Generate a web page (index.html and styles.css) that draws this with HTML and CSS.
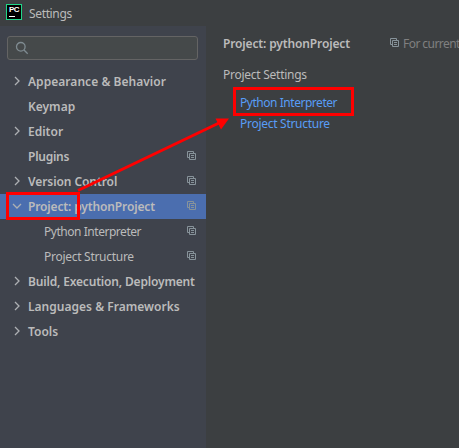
FILE: index.html
```
<!DOCTYPE html>
<html lang="en">
<head>
<meta charset="utf-8">
<title>Settings</title>
<link rel="stylesheet" href="styles.css">
</head>
<body>
<svg class="defs" width="0" height="0">
  <symbol id="copy" viewBox="0 0 9 9"><path d="M2 6.5H.5v-6h6V2M2.5 2.5h6v6h-6zM4 4.5h3M4 6.5h3"/></symbol>
  <symbol id="right" viewBox="0 0 6 10"><path d="M1 1l4 4-4 4"/></symbol>
  <symbol id="down" viewBox="0 0 10 6"><path d="M1 1l4 4 4-4"/></symbol>
</svg>
<div class="window">
  <header class="titlebar">
    <div class="logo"><span>PC</span><i></i></div>
    <span class="title">Settings</span>
  </header>
  <div class="body">
    <nav class="sidebar">
      <div class="search">
        <svg width="14" height="14" viewBox="0 0 14 14"><circle cx="5.8" cy="5.8" r="4.3"/><path d="M9 9l3.7 3.7"/></svg>
      </div>
      <ul class="tree">
        <li><svg class="chev"><use href="#right"/></svg><span class="t-appearance">Appearance &amp; Behavior</span></li>
        <li><span class="t-keymap">Keymap</span></li>
        <li><svg class="chev"><use href="#right"/></svg><span class="t-editor">Editor</span></li>
        <li><span class="t-plugins">Plugins</span><svg class="copy"><use href="#copy"/></svg></li>
        <li><svg class="chev"><use href="#right"/></svg><span class="t-version">Version Control</span><svg class="copy"><use href="#copy"/></svg></li>
        <li class="selected"><svg class="chev open"><use href="#down"/></svg><span class="t-project">Project: pythonProject</span><svg class="copy"><use href="#copy"/></svg></li>
        <li class="child"><span class="t-interp">Python Interpreter</span><svg class="copy"><use href="#copy"/></svg></li>
        <li class="child"><span class="t-struct">Project Structure</span><svg class="copy"><use href="#copy"/></svg></li>
        <li><svg class="chev"><use href="#right"/></svg><span class="t-build">Build, Execution, Deployment</span></li>
        <li><svg class="chev"><use href="#right"/></svg><span class="t-lang">Languages &amp; Frameworks</span></li>
        <li><svg class="chev"><use href="#right"/></svg><span class="t-tools">Tools</span></li>
      </ul>
    </nav>
    <main class="content">
      <div class="heading">
        <h1 class="t-project">Project: pythonProject</h1>
        <svg class="copy"><use href="#copy"/></svg>
        <span class="scope">For current</span>
      </div>
      <p class="section">Project Settings</p>
      <a class="t-interp">Python Interpreter</a>
      <a class="t-struct">Project Structure</a>
    </main>
  </div>
  <svg class="marks" width="459" height="448" viewBox="0 0 459 448">
    <rect x="7.5" y="193.5" width="71" height="25"/>
    <rect x="234.5" y="88.5" width="118" height="26"/>
    <path d="M78 190.5L219 123"/>
    <path class="head" d="M229 118.5L215.5 118.5L221 129.5z"/>
  </svg>
</div>
</body>
</html>
```
FILE: styles.css
```
* { box-sizing: border-box; }
body { margin: 0; font: 12px/16px "Noto Sans", "Open Sans", sans-serif; color: #bbbbbb; background: #3c3f41; }
.defs { position: absolute; }
.window { position: relative; width: 459px; height: 448px; overflow: hidden; display: flex; flex-direction: column; }
.titlebar { height: 26px; display: flex; padding: 4px 0 0 6px; flex: none; }
.logo { width: 16px; height: 16px; border: 1px solid #21d789; background: #000; padding: 1px 0 0 2px; display: flex; flex-direction: column; }
.logo span { font: bold 8px/8px "Liberation Sans", sans-serif; color: #fff; letter-spacing: -0.6px; }
.logo i { width: 6px; height: 1px; background: #fff; margin-top: 2px; }
.title { margin: 2px 0 0 7px; letter-spacing: -0.35px; }
.body { flex: 1; display: flex; }
.sidebar { width: 206px; background: #3f434c; padding-top: 10px; flex: none; }
.search { height: 24px; margin: 0 8px 0 7px; border: 1px solid #646464; border-radius: 3px; background: #45494a; padding: 4px 0 0 7px; }
.search svg { display: block; fill: none; stroke: #7f8b91; stroke-width: 1.3; }
.tree { list-style: none; margin: 9px 0 0; padding: 0; font-weight: 600; }
.tree li { height: 25px; display: grid; grid-template-columns: 16px 1fr 9px; align-items: center; padding: 0 10px 0 12px; }
.tree li span { grid-column: 2; grid-row: 1; white-space: nowrap; }
.tree .child { grid-template-columns: 32px 1fr 9px; font-weight: 400; }
.tree .selected { background: #4b6eaf; }
.t-appearance { letter-spacing: 0.04px; }
.t-plugins { letter-spacing: -0.25px; }
.t-version { letter-spacing: -0.08px; }
.t-project { letter-spacing: -0.14px; }
.t-interp { letter-spacing: -0.46px; }
.t-struct { letter-spacing: -0.28px; }
.t-build { letter-spacing: -0.17px; }
.t-lang { letter-spacing: 0.02px; }
.chev { grid-column: 1; grid-row: 1; width: 6px; height: 10px; margin: 0 0 2px 2px; fill: none; stroke: #adb0b3; stroke-width: 1.3; }
.open { width: 10px; height: 6px; margin-left: 0; }
.copy { grid-column: 3; grid-row: 1; width: 9px; height: 9px; fill: none; stroke: #87939a; stroke-width: 1; }
.tree .copy { margin: 0 0 2px; }
.content { padding: 10px 0 0 17px; flex: 1; min-width: 0; overflow: hidden; }
.heading { display: flex; white-space: nowrap; }
h1 { margin: 0; width: 167px; font-size: 12px; line-height: 16px; font-weight: 600; flex: none; }
.heading .copy { margin-top: 2px; flex: none; }
.scope { color: #808080; margin-left: 4px; letter-spacing: -0.55px; }
.section { margin: 15px 0 12px; letter-spacing: -0.26px; }
.content a { display: block; color: #589df6; margin: 0 0 5px 17px; }
.marks { position: absolute; left: 0; top: 0; fill: none; stroke: #ff0000; stroke-width: 3; }
.marks .head { fill: #ff0000; stroke: none; }
```
